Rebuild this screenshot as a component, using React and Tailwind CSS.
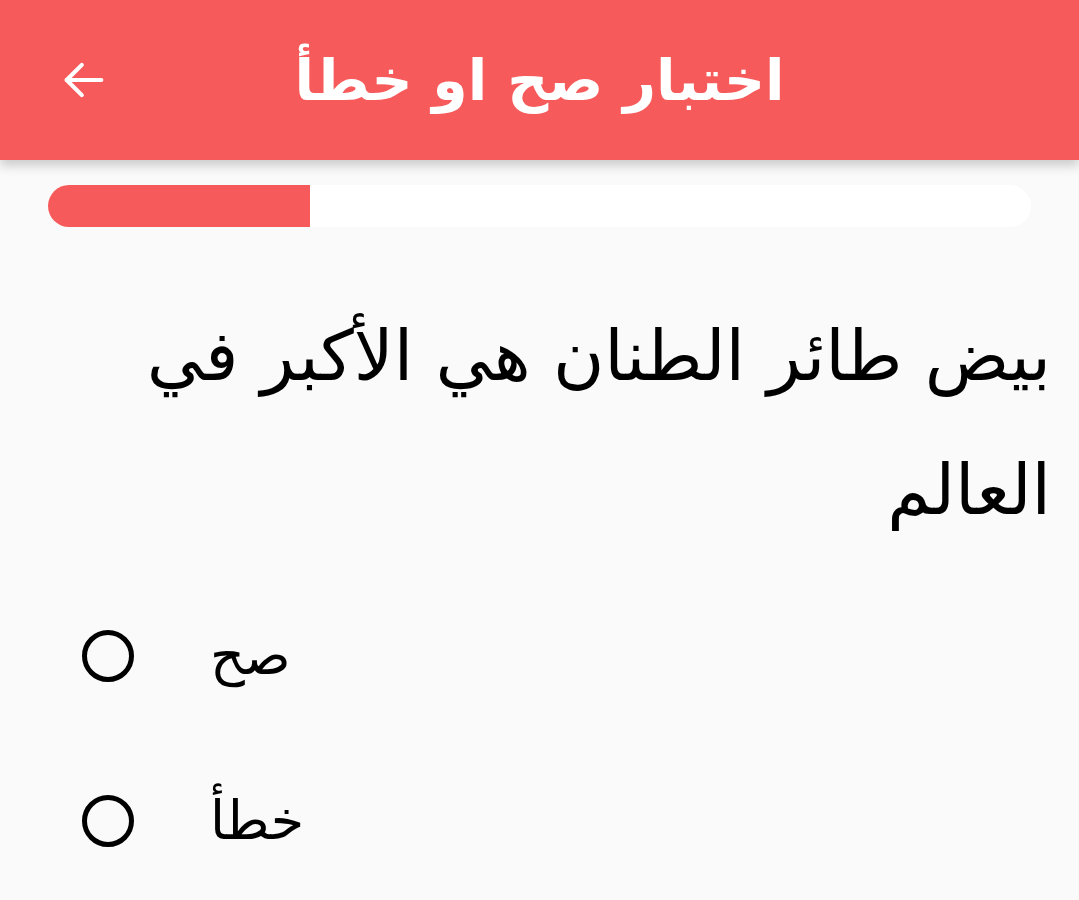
import React, { useState } from "react";

const options = ["صح", "خطأ"];

const App = () => {
  const [selected, setSelected] = useState(null);

  return (
    <div
      className="min-h-[900px] w-full bg-[#fafafa]"
      style={{ fontFamily: '"DejaVu Sans", sans-serif' }}
    >
      {/* Header */}
      <div className="relative z-10 flex h-[160px] items-center bg-[#f65a5b] px-[58px] shadow-[0_6px_10px_rgba(0,0,0,0.18)]">
        <button className="flex h-[56px] w-[56px] items-center text-white">
          <svg width="52" height="52" viewBox="0 0 24 24" fill="none" stroke="currentColor" strokeWidth="1.9" strokeLinecap="round" strokeLinejoin="round">
            <path d="M20 12H4" />
            <path d="M11 5l-7 7 7 7" />
          </svg>
        </button>
        <h1 dir="rtl" className="flex-1 pr-[56px] text-center text-[57px] font-bold leading-none text-white">
          اختبار صح او خطأ
        </h1>
      </div>

      {/* Progress */}
      <div className="px-[48px] pt-[25px]">
        <div className="h-[42px] w-full overflow-hidden rounded-full bg-white">
          <div className="h-full w-[262px] bg-[#f65a5b]" />
        </div>
      </div>

      {/* Question */}
      <p dir="rtl" className="px-[28px] pt-[62px] text-right text-[70px] leading-[134px] text-black">
        بيض طائر الطنان هي الأكبر في
        <br />
        العالم
      </p>

      {/* Options */}
      <div className="mt-[73px] flex flex-col gap-[113px] pl-[82px]">
        {options.map((opt, i) => (
          <label key={opt} className="flex h-[52px] cursor-pointer items-center gap-[76px]" onClick={() => setSelected(i)}>
            <span className="flex h-[52px] w-[52px] items-center justify-center rounded-full border-[5px] border-black">
              {selected === i && <span className="h-[24px] w-[24px] rounded-full bg-black" />}
            </span>
            <span className="text-[54px] leading-none text-black">{opt}</span>
          </label>
        ))}
      </div>
    </div>
  );
};

export default App;
